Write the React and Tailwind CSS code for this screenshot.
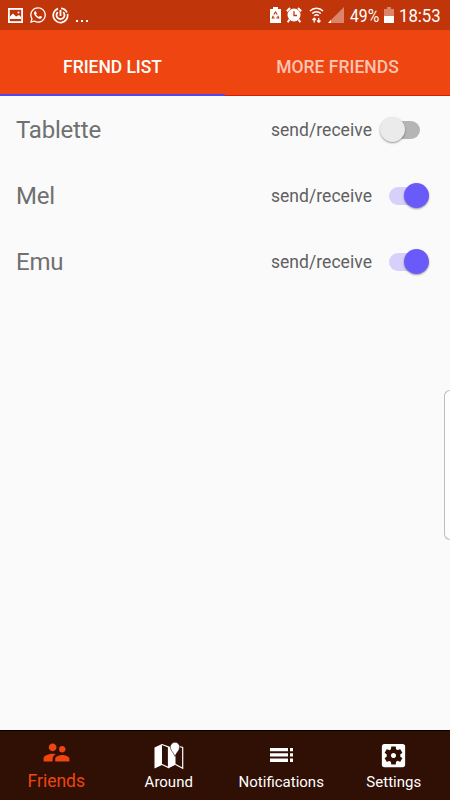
import React, { useState } from 'react';
import { FaWhatsapp } from 'react-icons/fa';
import { MdSupervisorAccount, MdSettingsApplications } from 'react-icons/md';

const friendList = [
    { id: 1, name: 'Tablette', enabled: false },
    { id: 2, name: 'Mel', enabled: true },
    { id: 3, name: 'Emu', enabled: true },
];

const MapIcon = () => (
    <svg width="30" height="28" viewBox="0 0 30 28" fill="none">
        <path d="M.5 5.500 8 2v21L.5 26.500z" fill="#fff" />
        <path d="M8 2.500 14.500 5v20.500L8 22.500M14.500 25.500l7-3.500" stroke="#fff" strokeWidth="1.200" />
        <path d="M14.500 5l2-.8 5 9.800V22.500l-7 3.500z" fill="#fff" />
        <path d="M25.500 4.500l3.200 1V26.200L21.500 22.500" stroke="#fff" strokeWidth="1.200" />
        <path d="M21 .3a4.700 4.700 0 0 1 4.700 4.700c0 3.300-3.300 5.500-4.700 9.500-1.400-4-4.700-6.200-4.700-9.500A4.700 4.700 0 0 1 21 .3z" fill="#fff" stroke="#300f04" strokeWidth=".6" />
    </svg>
);

const ListIcon = () => (
    <svg width="23" height="14" viewBox="0 0 23 14" fill="#fff">
        <path d="M0 0h18v3.300H0zM0 5.300h18v3.300H0zM0 10.600h18v3.300H0z" />
        <path d="M20 0h3v3.300h-3zM20 5.300h3v3.300h-3zM20 10.600h3v3.300h-3z" />
    </svg>
);

const StatusBar = () => (
    <div className="flex h-[30px] items-center bg-[#c1350a] text-white">
        <svg className="ml-[8px]" width="15" height="15" viewBox="0 0 15 15" fill="none">
            <rect x=".9" y=".9" width="13.200" height="13.200" stroke="#fff" strokeWidth="1.800" />
            <path d="M2 11V8.500L5 5.500l3 3L11 7l2 2v2z" fill="#fff" />
            <circle cx="10.500" cy="4.500" r="1" fill="#fff" />
        </svg>
        <FaWhatsapp className="ml-[6px]" size={18} />
        <svg className="ml-[5px]" width="17" height="17" viewBox="0 0 17 17" fill="none" stroke="#fff">
            <path d="M6 1.600A7.200 7.200 0 1 0 15.500 7M9 1.300A7.200 7.200 0 0 1 15 5.500" strokeWidth="1.700" />
            <path d="M5.800 5.200a4 4 0 1 0 5.400 0" strokeWidth="1.800" />
            <path d="M8.500 3v6" strokeWidth="1.800" />
        </svg>
        <span className="ml-[7px] flex gap-[3px] pt-[11px]">
            <span className="size-[2px] bg-white" />
            <span className="size-[2px] bg-white" />
            <span className="size-[2px] bg-white" />
        </span>

        <div className="ml-auto flex items-center pr-[9px]">
            <svg width="11" height="16" viewBox="0 0 11 16" fill="none">
                <path d="M3 0h5v2h3v14H0V2h3z" fill="#fff" />
                <path d="M3.800 7.500 5.500 5l1.700 2.500M7.800 8.800l.8 2.200H6.300M4.700 11H2.400l.8-2.200" stroke="#c1350a" strokeWidth="1.200" />
            </svg>
            <svg className="ml-[5px]" width="16" height="16" viewBox="0 0 16 16" fill="none">
                <circle cx="8" cy="8" r="6.500" fill="#fff" />
                <path d="M.8 4.200 4 1M12 1l3.200 3.200M3.500 12.500l-1.800 2.700M12.500 12.500l1.800 2.700" stroke="#fff" strokeWidth="2" />
                <path d="M8 4.200V8.500h3" stroke="#c1350a" strokeWidth="1.300" />
            </svg>
            <svg className="ml-[7px]" width="15" height="16" viewBox="0 0 15 16" fill="none" stroke="#fff">
                <path d="M1 4a9 9 0 0 1 13 0M3.200 6.500a6 6 0 0 1 8.600 0M5.300 8.800a3.200 3.200 0 0 1 4.400 0" strokeWidth="1.500" />
                <path d="M5.200 15.500v-4M3.500 13l1.700-1.800L6.900 13M9.800 11v4M8.100 13.500l1.700 1.800 1.700-1.800" strokeWidth="1.300" />
            </svg>
            <svg className="ml-[4px]" width="16" height="16" viewBox="0 0 16 16">
                <path d="M16 0v16H0z" fill="#dc846a" />
                <path d="M3 13v3H0z" fill="#fff" />
            </svg>
            <span className="ml-[6px] w-[31px] whitespace-nowrap text-[19px] leading-[30px]">
                <span className="inline-block origin-left scale-x-[.83] pt-px">49%</span>
            </span>
            <svg className="ml-[3px]" width="10" height="16" viewBox="0 0 10 16">
                <path d="M3 0h4v2h3v7H0V2h3z" fill="#dc846a" />
                <path d="M0 9h10v7H0z" fill="#fff" />
            </svg>
            <span className="ml-[5px] w-[42px] whitespace-nowrap text-[19px] leading-[30px]">
                <span className="inline-block origin-left scale-x-[.88] pt-px">18:53</span>
            </span>
        </div>
    </div>
);

const Switch = ({ checked, onChange }) => (
    <button
        type="button"
        role="switch"
        aria-checked={checked}
        onClick={onChange}
        className="relative h-[26px] w-[50px]"
    >
        <span className={`absolute top-[4px] h-[18px] w-[34px] rounded-full ${checked ? 'left-[9px] bg-[#d6d0fa]' : 'left-[6px] bg-[#b5b5b5]'}`} />
        <span className={`absolute top-0 size-[25px] rounded-full shadow-[0_1px_2px_rgba(0,0,0,0.4)] ${checked ? 'left-[24px] bg-[#6a5afa]' : 'left-0 bg-[#ebebeb]'}`} />
    </button>
);

const App = () => {

    const [friends, setFriends] = useState(friendList);

    const toggle = (id) => {
        setFriends(friends.map(f => f.id === id ? { ...f, enabled: !f.enabled } : f));
    };

    return (
        <div className="relative flex h-[800px] w-[450px] flex-col overflow-hidden bg-[#fafafa] font-['Roboto',sans-serif]">
            <StatusBar />

            <div className="grid h-[66px] grid-cols-2 bg-[#ef4510] text-[17.500px] font-medium">
                <button className="border-b-2 border-[#4f46f0] pt-[10px] tracking-[-0.05px] text-white">FRIEND LIST</button>
                <button className="border-b border-[#d81c08] pt-[10px] text-[#fbc4b3]">MORE FRIENDS</button>
            </div>

            <ul className="flex-1 pt-px">
                {friends.map(friend => (
                    <li key={friend.id} className="flex h-[66px] items-center pr-5 pl-4">
                        <span className="flex-1 text-[24px] tracking-[-0.2px] text-[#707070]">{friend.name}</span>
                        <span className="mr-[8px] pt-px text-[17.500px] tracking-[0.05px] text-[#606060]">send/receive</span>
                        <Switch checked={friend.enabled} onChange={() => toggle(friend.id)} />
                    </li>
                ))}
            </ul>

            {/* edge panel handle */}
            <div className="absolute top-[390px] right-0 h-[150px] w-[6px] rounded-l-[6px] border border-r-0 border-[#bdbdbd] bg-[#fdfdfd]" />

            <nav className="grid h-[70px] grid-cols-4 border-t border-black bg-[#300f04] text-[15px] text-white">
                <button className="flex flex-col items-center text-[17.500px] text-[#ef4510]">
                    <span className="flex h-[38px] items-center pt-[5px]"><MdSupervisorAccount size={31} /></span>
                    <span className="leading-6">Friends</span>
                </button>
                <button className="flex flex-col items-center">
                    <span className="flex h-[39px] items-center pt-[10px]"><MapIcon /></span>
                    <span className="leading-6">Around</span>
                </button>
                <button className="flex flex-col items-center">
                    <span className="flex h-[39px] items-center pt-[9px]"><ListIcon /></span>
                    <span className="leading-6">Notifications</span>
                </button>
                <button className="flex flex-col items-center">
                    <span className="flex h-[39px] items-center pt-[9px]"><MdSettingsApplications size={31} /></span>
                    <span className="leading-6">Settings</span>
                </button>
            </nav>
        </div>
    );
};

export default App;
